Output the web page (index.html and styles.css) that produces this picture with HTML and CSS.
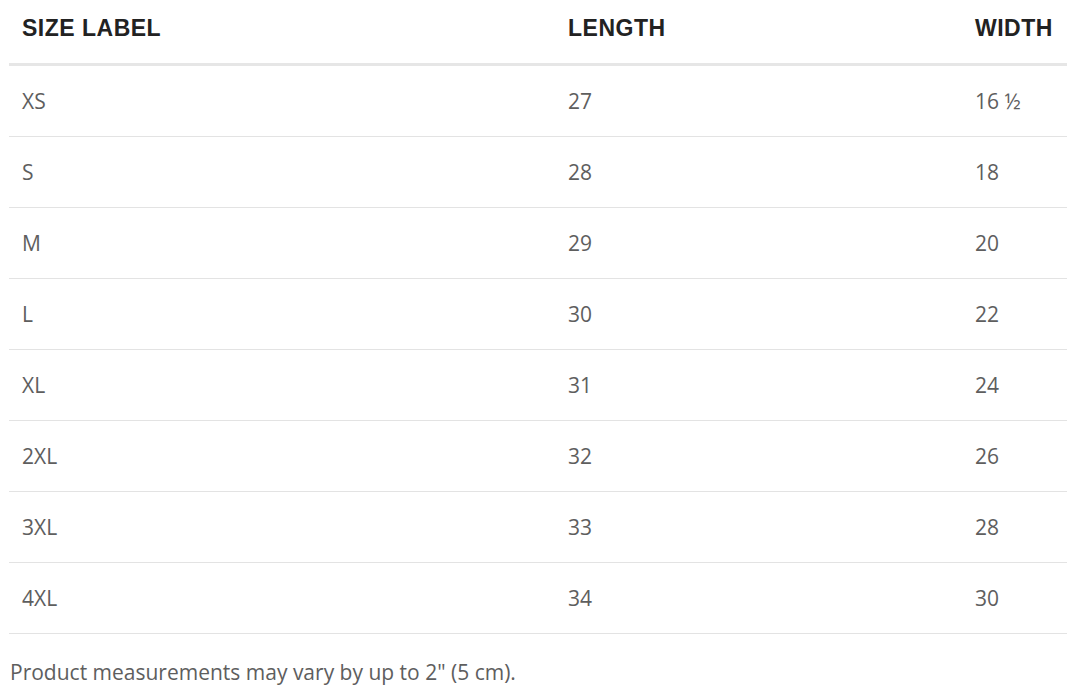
FILE: index.html
```html
<!DOCTYPE html>
<html>
<head>
<meta charset="utf-8">
<link rel="stylesheet" href="styles.css">
</head>
<body>
<table class="size-table">
  <colgroup>
    <col class="c1">
    <col class="c2">
    <col class="c3">
  </colgroup>
  <thead>
    <tr><th>SIZE LABEL</th><th>LENGTH</th><th>WIDTH</th></tr>
  </thead>
  <tbody>
    <tr><td>XS</td><td>27</td><td>16 ½</td></tr>
    <tr><td>S</td><td>28</td><td>18</td></tr>
    <tr><td>M</td><td>29</td><td>20</td></tr>
    <tr><td>L</td><td>30</td><td>22</td></tr>
    <tr><td>XL</td><td>31</td><td>24</td></tr>
    <tr><td>2XL</td><td>32</td><td>26</td></tr>
    <tr><td>3XL</td><td>33</td><td>28</td></tr>
    <tr><td>4XL</td><td>34</td><td>30</td></tr>
  </tbody>
</table>
<p class="note">Product measurements may vary by up to 2" (5 cm).</p>
</body>
</html>
```
FILE: styles.css
```css
html, body {
  margin: 0;
  padding: 0;
  background: #ffffff;
}
body {
  padding: 0 0 0 9px;
  font-family: "Open Sans", "Liberation Sans", sans-serif;
}
.size-table {
  border-collapse: collapse;
  width: 1058px;
  table-layout: fixed;
}
.c1 { width: 546px; }
.c2 { width: 407px; }
.c3 { width: 105px; }
.size-table th {
  font-family: "Liberation Sans", Arial, sans-serif;
  font-weight: bold;
  font-size: 23px;
  letter-spacing: 0.5px;
  color: #222222;
  text-align: left;
  padding: 0 0 5px 13px;
  height: 64px;
  vertical-align: middle;
  border-bottom: 3px solid #e6e6e6;
  box-sizing: border-box;
}
.size-table td {
  font-size: 21px;
  color: #5e5e5e;
  padding: 0 0 0 13px;
  height: 70px;
  vertical-align: middle;
  border-bottom: 1px solid #e3e3e3;
}
.note {
  margin: 24px 0 0 1px;
  font-size: 21px;
  color: #5e5e5e;
}
```
